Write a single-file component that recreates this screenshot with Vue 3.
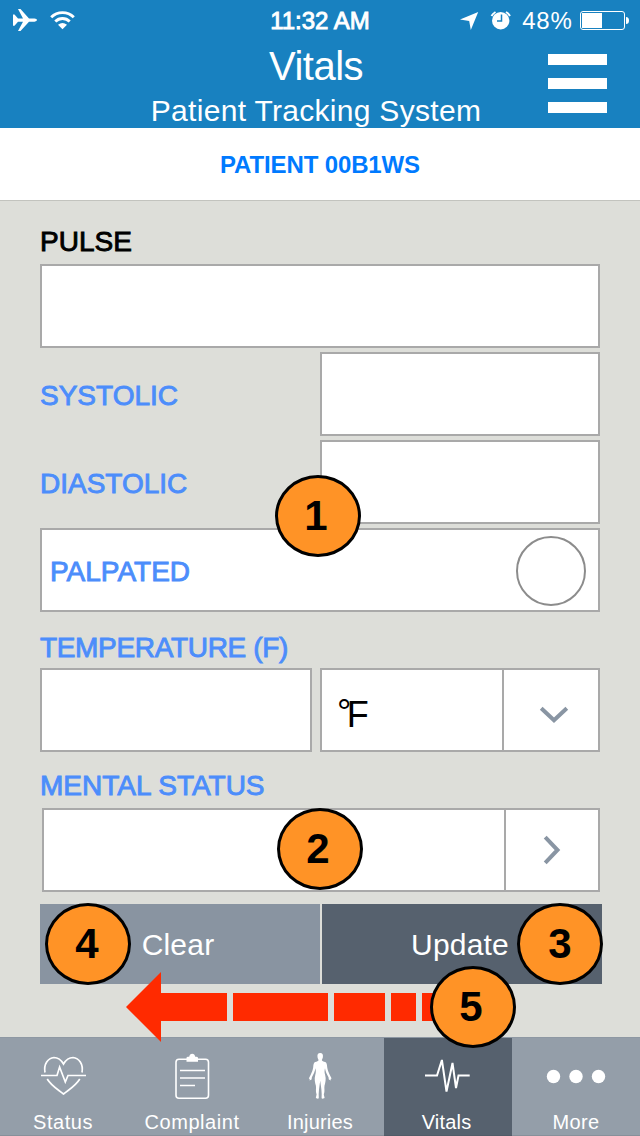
<script setup>
const tabs = [
  { id: 'status', label: 'Status' },
  { id: 'complaint', label: 'Complaint' },
  { id: 'injuries', label: 'Injuries' },
  { id: 'vitals', label: 'Vitals', active: true },
  { id: 'more', label: 'More' }
]
const badges = [1, 2, 3, 4, 5]
</script>

<template>
  <div class="screen">
    <header class="header">
      <div class="statusbar">
        <svg class="sys" width="80" height="40" viewBox="0 0 80 40" fill="#fff">
          <path d="M13 14.500h1.500l3.500 4h5L18 9h2.500l8.500 9.500h5.500q2.500.2 2.500 1.600t-2.500 1.600H29L20.500 31H18l5-9.300h-5l-3.500 4H13z" />
          <g fill="none" stroke="#fff" stroke-width="2.900">
            <path d="M51.200 17.300a16 16 0 0 1 22.600 0" />
            <path d="M55.300 21.500a10.300 10.300 0 0 1 14.400 0" />
          </g>
          <path d="M58 24.800q4.500-3.600 9 0l-4.500 4.400z" />
        </svg>
        <div class="time">11:32 AM</div>
        <div class="power">
          <svg width="64" height="40" viewBox="455 0 64 40" fill="#fff">
            <path d="M478.200 12l-7.400 18-1.600-9-9.200-1.500z" />
            <circle cx="500.700" cy="20.700" r="8.700" />
            <path d="M491.500 16a10.500 10.500 0 0 1 4-4M506 12a10.500 10.500 0 0 1 4 4" fill="none" stroke="#fff" stroke-width="2" />
            <path d="M501.500 14.500V21H497" fill="none" stroke="#1881c0" stroke-width="1.500" />
          </svg>
          <span class="percent">48%</span>
          <svg width="54" height="40" viewBox="578 0 54 40">
            <rect x="580.500" y="11.500" width="44" height="18" rx="2.500" fill="none" stroke="#fff" />
            <path d="M582 13h20v15h-20z" fill="#fff" />
            <path d="M626 17q3 0 3 3.500t-3 3.500z" fill="#fff" />
          </svg>
        </div>
      </div>
      <h1>Vitals</h1>
      <h2>Patient Tracking System</h2>
      <div class="menu"><i /><i /><i /></div>
    </header>

    <div class="patient">PATIENT 00B1WS</div>

    <main class="form">
      <div class="label pulse">PULSE</div>
      <div class="field" />
      <div class="row">
        <div class="label systolic">SYSTOLIC</div>
        <div class="field half" />
      </div>
      <div class="row">
        <div class="label diastolic">DIASTOLIC</div>
        <div class="field half" />
      </div>
      <div class="field palpated">
        <div class="label">PALPATED</div>
        <div class="radio" />
      </div>
      <div class="label temperature">TEMPERATURE (F)</div>
      <div class="temps">
        <div class="field temp" />
        <div class="field half unit">
          <div class="degree"><sup>°</sup>F</div>
          <div class="pick">
            <svg width="94" height="80" viewBox="504 670 94 80"><path d="M541.200 708.200l12.800 12 12.800-12" /></svg>
          </div>
        </div>
      </div>
      <div class="label mental">MENTAL STATUS</div>
      <div class="field choice">
        <div class="pick">
          <svg width="92" height="80" viewBox="506 810 92 80"><path d="M545.200 837.200l12.300 12.800-12.300 12.800" /></svg>
        </div>
      </div>
      <div class="actions">
        <div class="button clear">Clear</div>
        <div class="button update">Update</div>
      </div>
    </main>

    <nav class="tabbar">
      <div v-for="t in tabs" :key="t.id" class="tab" :class="[t.id, { active: t.active }]">
        <svg v-if="t.id === 'status'" width="128" height="70" viewBox="0 1038 128 70" fill="none" stroke="#fff" stroke-width="1.700">
          <path d="M45 1072.500C43.500 1064 48 1058 54 1057.500c4.500 0 7.500 3 9.500 6.500 2-3.500 5-6.500 9.500-6.500 6 .5 10.500 6.500 9 15" />
          <path d="M41 1075.500h16l2.600-8.500 5.700 15 2.700-6.500h18" />
          <path d="M47.200 1079c4.300 7 10.300 10.200 16.300 15 6-4.800 12-8 16.300-15" />
        </svg>
        <svg v-else-if="t.id === 'complaint'" width="128" height="70" viewBox="128 1038 128 70" fill="none" stroke="#fff" stroke-width="1.600">
          <rect x="176" y="1059.200" width="32.500" height="39" rx="3" />
          <path d="M180 1070.500h25M180 1078h25M180 1085.500h15" />
          <path d="M186.500 1061.800V1058q0-1.300 1.500-1.300h1.200q.5-2.900 3-2.900t3 2.900h1.200q1.600 0 1.600 1.300v3.800z" fill="#fff" stroke="none" />
        </svg>
        <svg v-else-if="t.id === 'injuries'" width="128" height="70" viewBox="256 1038 128 70" fill="#fff">
          <path d="M320.200 1053c2.200 0 3 1.500 2.700 4-.2 1.600-.8 2.300-1.100 3 .2 1.200 1.700 1.500 3.500 2.100 1.500.8 1.700 3 1.900 5.200.3 3 1.500 5 2.500 7.400l1.900 3.800-1 .5.300 1.600-2.100-1.100-.3-2.200c-1.600-3-3-5.400-3.500-9-.5 2-.7 4 .1 6.400 1.300 4.400.2 8-.6 11.100-.5 3 .6 5-.7 8.700l.8 3.500-2 .8-1-.5c.5-6-.6-11.500-1.400-17.600-.8 6.100-1.900 11.600-1.400 17.600l-1 .5-2-.8.800-3.500c-1.300-3.700-.2-5.700-.7-8.700-.8-3.100-1.900-6.700-.6-11.100.8-2.400.6-4.400.1-6.400-.5 3.600-1.900 6-3.500 9l-.3 2.200-2.100 1.100.3-1.600-1-.5 1.900-3.800c1-2.400 2.200-4.400 2.500-7.400.2-2.200.4-4.400 1.900-5.200 1.800-.6 3.300-.9 3.500-2.100-.3-.7-.9-1.400-1.100-3-.3-2.500.5-4 2.700-4z" />
        </svg>
        <svg v-else-if="t.id === 'vitals'" width="128" height="70" viewBox="384 1038 128 70" fill="none" stroke="#fff" stroke-width="2" stroke-miterlimit="3">
          <path d="M425 1075.500h12l4.900-15.500 4.600 31.500 6-28.500 3.500 25 2.500-12.500h11.200" />
        </svg>
        <svg v-else width="128" height="70" viewBox="512 1038 128 70" fill="#fff">
          <circle cx="553.500" cy="1076.500" r="6.700" />
          <circle cx="576" cy="1076.500" r="6.700" />
          <circle cx="598.500" cy="1076.500" r="6.700" />
        </svg>
        <span>{{ t.label }}</span>
      </div>
    </nav>

    <svg class="arrow" width="316" height="70" viewBox="126 972 316 70" fill="#ff2a00">
      <path d="M126 1007l35-35v21h66v28h-66v21zM233 993h95v28h-95zM334 993h51v28h-51zM391 993h25v28h-25zM422 993h20v28h-20z" />
    </svg>
    <div v-for="n in badges" :key="n" class="badge" :class="'step' + n">{{ n }}</div>
  </div>
</template>

<style>
body {
  margin: 0;
}
</style>

<style scoped>
* {
  box-sizing: border-box;
}
.screen {
  position: relative;
  display: flex;
  flex-direction: column;
  width: 640px;
  height: 1136px;
  overflow: hidden;
  background: #ddded9;
  font-family: "Liberation Sans", Arial, sans-serif;
}
svg {
  display: block;
  flex: none;
}
.header {
  position: relative;
  height: 128px;
  background: #1881c0;
  color: #fff;
  text-align: center;
}
.statusbar {
  display: grid;
  grid-template-columns: 1fr 120px 1fr;
  height: 40px;
}
.time {
  font-size: 24px;
  line-height: 41px;
  -webkit-text-stroke: 0.9px #fff;
  white-space: nowrap;
}
.power {
  display: flex;
  justify-content: flex-end;
  padding-right: 8px;
}
.percent {
  width: 57px;
  margin-right: 2px;
  font-size: 24px;
  line-height: 42px;
  letter-spacing: 0.9px;
}
h1,
h2 {
  margin: 0;
  font-weight: 400;
}
h1 {
  padding-right: 8px;
  font-size: 40px;
  line-height: 52px;
  letter-spacing: -0.5px;
}
h2 {
  padding-right: 8px;
  font-size: 30px;
  line-height: 38px;
  letter-spacing: 0.3px;
}
.menu {
  position: absolute;
  left: 548px;
  top: 54px;
  display: flex;
  flex-direction: column;
  justify-content: space-between;
  width: 59px;
  height: 59px;
}
.menu i {
  height: 11px;
  background: #fff;
}
.patient {
  height: 73px;
  border-bottom: 1px solid #c2c3be;
  background: #fff;
  color: #007aff;
  font-size: 24px;
  font-weight: 700;
  line-height: 74px;
  letter-spacing: -0.13px;
  text-align: center;
}
.form {
  height: 836px;
  padding: 23px 40px 0;
}
.label {
  color: #4c8dfb;
  font-size: 28px;
  line-height: 36px;
  white-space: nowrap;
  -webkit-text-stroke: 0.9px currentColor;
}
.pulse {
  height: 40px;
  color: #000;
}
.field {
  height: 84px;
  border: 2px solid #a9a9a9;
  background: #fff;
}
.row {
  display: flex;
  align-items: center;
  justify-content: space-between;
  margin-top: 4px;
}
.row .label,
.palpated .label {
  padding-top: 4px;
}
.half {
  width: 280px;
}
.palpated {
  display: flex;
  align-items: center;
  justify-content: space-between;
  margin-top: 4px;
  padding: 0 12px 0 8px;
}
.radio {
  width: 70px;
  height: 70px;
  margin-top: 2px;
  border: 2px solid #8c8c8c;
  border-radius: 50%;
}
.temperature {
  height: 38px;
  margin-top: 18px;
  letter-spacing: -0.33px;
}
.temps {
  display: flex;
  justify-content: space-between;
}
.temp {
  width: 272px;
}
.unit {
  display: flex;
  justify-content: space-between;
}
.choice {
  display: flex;
  justify-content: flex-end;
  margin-left: 2px;
}
.degree {
  padding-left: 15px;
  font-size: 36px;
  line-height: 89px;
}
.degree sup {
  font-size: 36px;
  line-height: 0;
  letter-spacing: -4.600px;
  vertical-align: 2px;
}
.pick {
  border-left: 2px solid #a9a9a9;
}
.pick path {
  fill: none;
  stroke: #8995a3;
  stroke-width: 4;
}
.mental {
  height: 40px;
  margin-top: 16px;
}
.actions {
  display: flex;
  gap: 2px;
  width: 562px;
  margin-top: 12px;
}
.button {
  flex: 1;
  height: 80px;
  padding-right: 4px;
  color: #fff;
  font-size: 30px;
  line-height: 81px;
  letter-spacing: 0.2px;
  text-align: center;
}
.clear {
  background: #8994a1;
}
.update {
  background: #56616e;
}
.tabbar {
  display: flex;
  height: 99px;
  border-top: 1px solid #8e98a3;
  background: #949ea9;
}
.tab {
  width: 128px;
  border-bottom: 1px solid #87909a;
  color: #fff;
  font-size: 20px;
  line-height: 29px;
  letter-spacing: 0.55px;
  text-align: center;
}
.tab.status span {
  padding-right: 2px;
}
.tab.injuries span {
  letter-spacing: 0.2px;
}
.tab.vitals span {
  padding-right: 3px;
  letter-spacing: 0.2px;
}
.tab.more span {
  letter-spacing: 0.3px;
}
.tab.active {
  border-bottom-color: #505b67;
  background: #56616e;
}
.arrow {
  position: absolute;
  left: 126px;
  top: 972px;
}
.badge {
  position: absolute;
  width: 86px;
  height: 82px;
  padding-right: 4px;
  border: 3px solid #000;
  border-radius: 50%;
  background: #ff9326;
  color: #000;
  font-size: 42px;
  font-weight: 700;
  line-height: 75px;
  text-align: center;
}
.step1 {
  left: 275px;
  top: 475px;
}
.step2 {
  left: 277px;
  top: 808px;
}
.step3 {
  left: 517px;
  top: 903px;
  padding-right: 0;
}
.step4 {
  left: 45px;
  top: 903px;
  padding-right: 2px;
}
.step5 {
  left: 430px;
  top: 966px;
}
</style>
